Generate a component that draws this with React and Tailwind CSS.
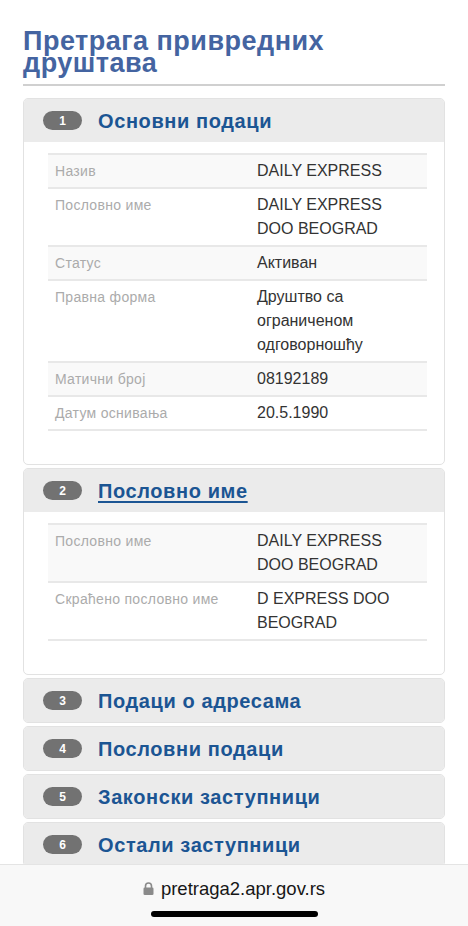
import React from 'react';

const basic = [
  { label: 'Назив', value: ['DAILY EXPRESS'] },
  { label: 'Пословно име', value: ['DAILY EXPRESS', 'DOO BEOGRAD'] },
  { label: 'Статус', value: ['Активан'] },
  { label: 'Правна форма', value: ['Друштво са', 'ограниченом', 'одговорношћу'] },
  { label: 'Матични број', value: ['08192189'] },
  { label: 'Датум оснивања', value: ['20.5.1990'] },
];

const names = [
  { label: 'Пословно име', value: ['DAILY EXPRESS', 'DOO BEOGRAD'] },
  { label: 'Скраћено пословно име', value: ['D EXPRESS DOO', 'BEOGRAD'] },
];

const collapsed = [
  { n: 3, title: 'Подаци о адресама' },
  { n: 4, title: 'Пословни подаци' },
  { n: 5, title: 'Законски заступници' },
  { n: 6, title: 'Остали заступници' },
];

function Badge({ n }) {
  return (
    <span className="flex h-[19px] w-[39px] shrink-0 items-center justify-center rounded-full bg-[#727272] text-[12px] font-bold leading-none text-white">
      {n}
    </span>
  );
}

function Header({ n, title, underline }) {
  return (
    <div className="flex h-[43px] items-center gap-[16px] bg-[#ebebeb] pl-[19px]">
      <Badge n={n} />
      <span
        className={
          'text-[20px] font-bold leading-none tracking-[0.6px] text-[#1b5593] ' +
          (underline ? 'underline decoration-2 underline-offset-[3px]' : '')
        }
      >
        {title}
      </span>
    </div>
  );
}

function Table({ rows }) {
  return (
    <div className="border-b-2 border-[#e8e8e8]">
      {rows.map((r, i) => (
        <div
          key={r.label}
          className={
            'grid grid-cols-[202px_1fr] border-t-2 border-[#e8e8e8] py-[4px] ' +
            (i % 2 === 0 ? 'bg-[#f9f9f9]' : 'bg-white')
          }
        >
          <div className="pl-[7px] text-[14px] leading-[24px] tracking-[0.3px] text-[#ababab]">{r.label}</div>
          <div className="pl-[7px] pr-[7px] text-[16px] leading-[24px] text-[#333333]">
            {r.value.map((v) => (
              <div key={v}>{v}</div>
            ))}
          </div>
        </div>
      ))}
    </div>
  );
}

function Card({ n, title, underline, rows }) {
  return (
    <div className="overflow-hidden rounded-[5px] border border-[#e2e2e2] bg-white">
      <Header n={n} title={title} underline={underline} />
      <div className="pl-[24px] pr-[17px] pt-[11px] pb-[33px]">
        <Table rows={rows} />
      </div>
    </div>
  );
}

export default function App() {
  return (
    <div className="flex h-[926px] flex-col overflow-hidden bg-white font-['Liberation_Sans',Arial,sans-serif]">
      <main className="min-h-0 flex-1 overflow-hidden px-[23px] pt-[30px]">
        <h1 className="border-b-2 border-[#d0d0d0] pb-[10px] text-[27px] font-bold leading-[22px] tracking-[0.5px] text-[#4464a1]">
          <span className="block">Претрага привредних</span>
          <span className="block">друштава</span>
        </h1>

        <div className="mt-[12px] flex flex-col gap-[3px]">
          <Card n={1} title="Основни подаци" rows={basic} />
          <Card n={2} title="Пословно име" underline rows={names} />
          {collapsed.map((c) => (
            <div key={c.n} className="overflow-hidden rounded-[5px] border border-[#e2e2e2]">
              <Header n={c.n} title={c.title} />
            </div>
          ))}
        </div>
      </main>

      <footer className="flex h-[62px] shrink-0 flex-col items-center border-t border-[#e4e4e4] bg-[#f8f8f8]">
        <div className="mt-[13px] flex items-center gap-[7px]">
          <svg width="11" height="13" viewBox="0 0 11 13" className="mb-[1px]">
            <path d="M2.5 6V4a3 3 0 0 1 6 0v2" fill="none" stroke="#8a8a8a" strokeWidth="1.6" />
            <rect x="0.5" y="5.5" width="10" height="7.5" rx="1.3" fill="#8a8a8a" />
          </svg>
          <span className="text-[18.5px] leading-[22px] text-[#161616]">pretraga2.apr.gov.rs</span>
        </div>
        <div className="mt-[11px] h-[6px] w-[167px] rounded-full bg-black" />
      </footer>
    </div>
  );
}
